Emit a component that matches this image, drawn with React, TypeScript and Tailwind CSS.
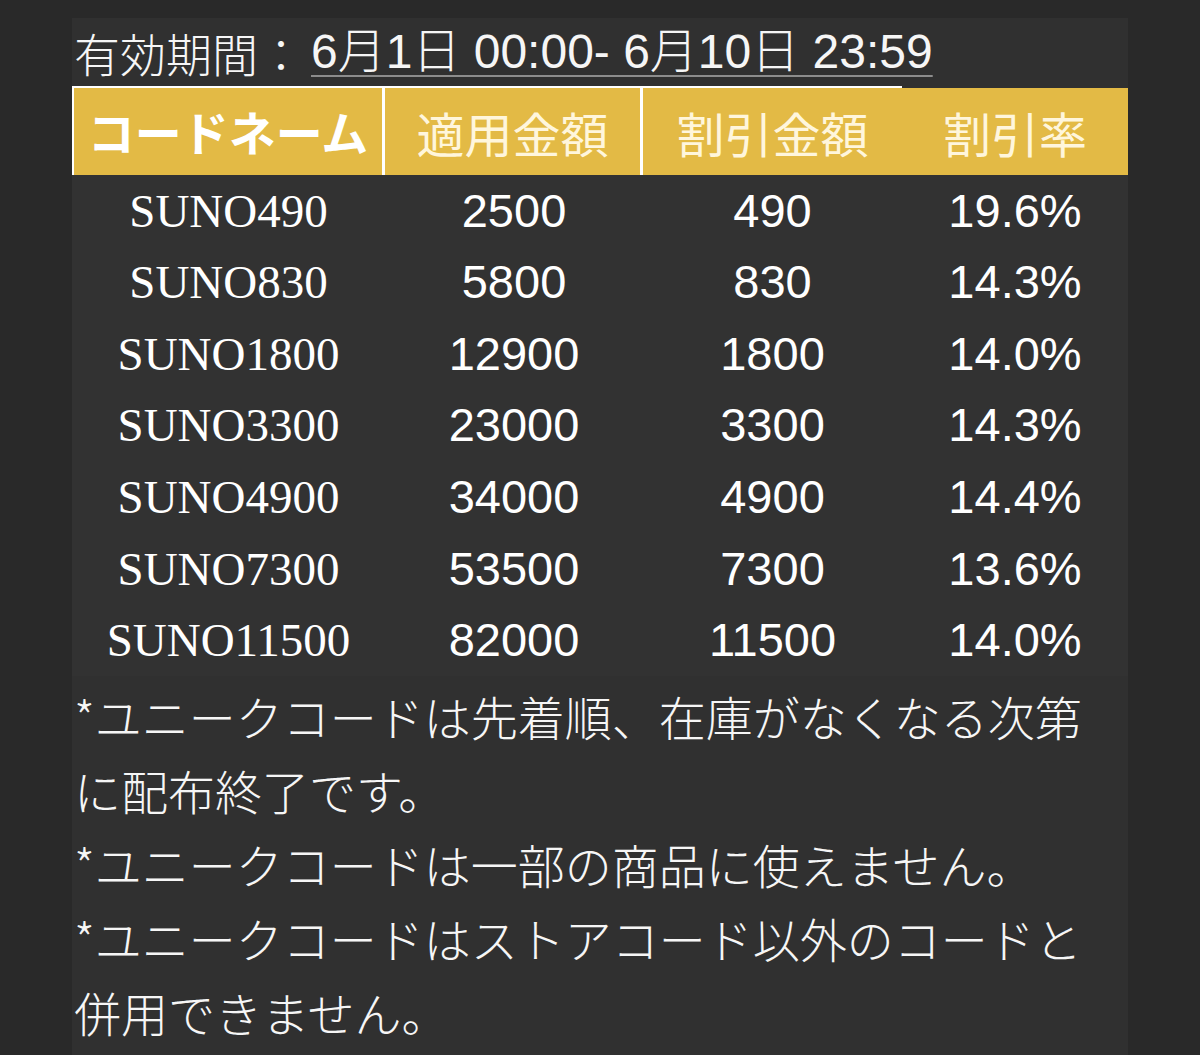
import React from 'react';

const rows = [
  ['SUNO490', '2500', '490', '19.6%'],
  ['SUNO830', '5800', '830', '14.3%'],
  ['SUNO1800', '12900', '1800', '14.0%'],
  ['SUNO3300', '23000', '3300', '14.3%'],
  ['SUNO4900', '34000', '4900', '14.4%'],
  ['SUNO7300', '53500', '7300', '13.6%'],
  ['SUNO11500', '82000', '11500', '14.0%'],
];

const jp = "font-['Noto_Sans_CJK_JP',sans-serif]";

export default function App() {
  return (
    <div className="min-h-[1055px] w-full bg-[#292929] pt-[18px]">
      <div className={`mx-[72px] min-h-[1037px] bg-[#303030] text-white ${jp}`}>
        {/* Period */}
        <div className="flex h-[68px] items-center pl-[2px] text-[46px] font-light text-[#f6f6f6]">
          <span>有効期間：</span>
          <span className="ml-[7px] font-['Liberation_Sans','Noto_Sans_CJK_JP',sans-serif] text-[48px] underline decoration-[#8c8c8c] decoration-2 underline-offset-[7px]">
            6月1日 00:00- 6月10日 23:59
          </span>
        </div>

        {/* Table */}
        <div className="grid grid-cols-[313px_258px_259px_226px]">
          <div className="flex h-[89px] items-center justify-center border-l-2 border-r-[3px] border-t-2 border-white bg-[#e3ba45] text-[47px] font-bold text-white">
            コードネーム
          </div>
          <div className="flex h-[89px] items-center justify-center border-r-[3px] border-t-2 border-white bg-[#e3ba45] text-[48px] text-[#fff6dc]">
            適用金額
          </div>
          <div className="flex h-[89px] items-center justify-center border-t-2 border-white bg-[#e3ba45] text-[48px] text-[#fff6dc]">
            割引金額
          </div>
          <div className="flex h-[89px] items-center justify-center border-t-2 border-[#303030] bg-[#e3ba45] text-[48px] text-[#fff6dc]">
            割引率
          </div>

          {rows.map((r) => (
            <React.Fragment key={r[0]}>
              <div className="flex h-[71.6px] items-center justify-center bg-[#323232] font-['Liberation_Serif',serif] text-[47px]">
                {r[0]}
              </div>
              {r.slice(1).map((v, i) => (
                <div
                  key={i}
                  className="flex h-[71.6px] items-center justify-center bg-[#323232] font-['Liberation_Sans',sans-serif] text-[47px]"
                >
                  {v}
                </div>
              ))}
            </React.Fragment>
          ))}
        </div>

        {/* Notes */}
        <div className="pl-[2px] pt-[3px] text-[47px] font-light leading-[74px] text-[#f6f6f6]">
          <p>*ユニークコードは先着順、在庫がなくなる次第に配布終了です。</p>
          <p>*ユニークコードは一部の商品に使えません。</p>
          <p>*ユニークコードはストアコード以外のコードと併用できません。</p>
        </div>
      </div>
    </div>
  );
}
